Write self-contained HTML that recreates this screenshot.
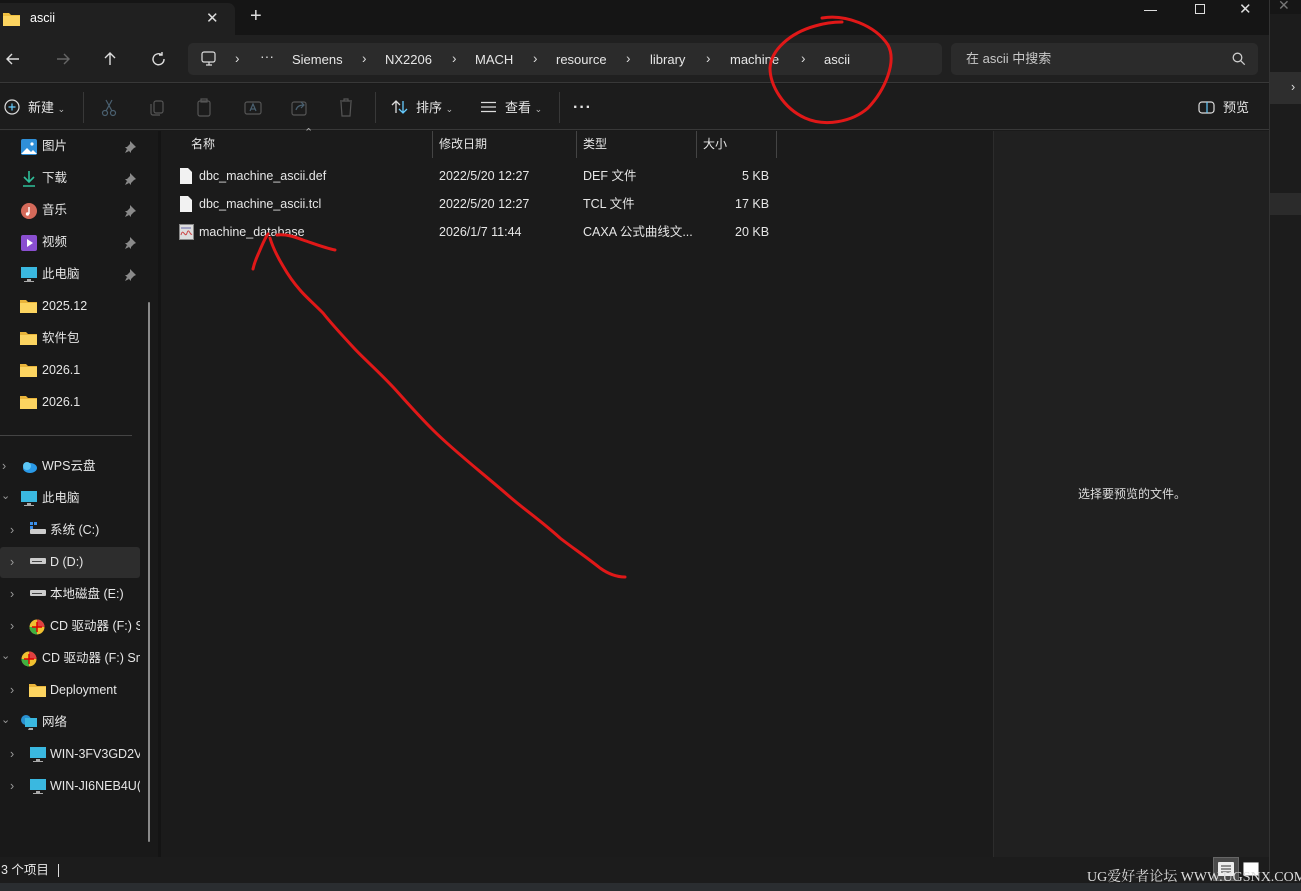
<!DOCTYPE html>
<html><head><meta charset="utf-8"><style>
*{margin:0;padding:0;box-sizing:border-box}
body{width:1301px;height:891px;overflow:hidden;background:#1a1a1a;font-family:"Liberation Sans","Noto Sans CJK SC",sans-serif;color:#e6e6e6;font-size:12.5px;position:relative}
.abs{position:absolute}
.t{position:absolute;white-space:nowrap;line-height:15px}
.dim{color:#9a9a9a}
</style></head><body>
<!-- right strip other window -->
<div class="abs" style="left:1269px;top:0;width:32px;height:891px;background:#1c1c1c"></div>
<div class="abs" style="left:1269px;top:0;width:32px;height:14px;background:#161616"></div>
<div class="t" style="left:1278px;top:-2px;color:#777;font-size:14px">✕</div>
<div class="abs" style="left:1269px;top:72px;width:32px;height:32px;background:#2e2e2e"></div>
<div class="t" style="left:1291px;top:80px;color:#ddd">›</div>
<div class="abs" style="left:1269px;top:193px;width:32px;height:22px;background:#2b2b2b"></div>
<div class="abs" style="left:1269px;top:0;width:1px;height:891px;background:#333"></div>
<!-- tab bar -->
<div class="abs" style="left:0;top:0;width:1269px;height:35px;background:#151515"></div>
<div class="abs" style="left:0;top:3px;width:235px;height:34px;background:#202020;border-radius:0 7px 0 0"></div>
<svg class="abs" style="left:3px;top:12px" width="18" height="14"><path d="M0 1h6l2 2h9v11H0z" fill="#f0c040"/><path d="M0 4h17v10H0z" fill="#fcd460"/></svg>
<div class="t" style="left:30px;top:11px;font-size:12.5px;color:#fff">ascii</div>
<div class="t" style="left:206px;top:11px;font-size:15px;color:#ddd">✕</div>
<div class="t" style="left:250px;top:9px;font-size:20px;color:#ddd;font-weight:300">+</div>
<div class="abs" style="left:1144px;top:10px;width:13px;height:1px;background:#ddd"></div>
<div class="abs" style="left:1195px;top:4px;width:10px;height:10px;border:1px solid #ddd"></div>
<div class="t" style="left:1239px;top:2px;font-size:15px;color:#ddd">✕</div>
<!-- address row -->
<div class="abs" style="left:0;top:35px;width:1269px;height:48px;background:#202020;border-bottom:1px solid #383838"></div>
<svg class="abs" style="left:0;top:45px" width="180" height="28" fill="none" stroke="#ddd" stroke-width="1.4">
<path d="M19 14H7M12 9l-5 5 5 5"/>
<path d="M57 14h12M64 9l5 5-5 5" stroke="#666"/>
<path d="M110 20V8M105 13l5-5 5 5"/>
<path d="M162 10a5.5 5.5 0 1 0 2 4M162 7v3h-3"/>
</svg>
<div class="abs" style="left:188px;top:43px;width:754px;height:32px;background:#2b2b2b;border-radius:5px"></div>
<svg class="abs" style="left:200px;top:50px" width="18" height="18" fill="none" stroke="#ddd" stroke-width="1.2"><rect x="2" y="2" width="13" height="10" rx="2"/><path d="M6 15h6M9 12v3"/></svg>
<div class="t" style="top:51px;left:235px;font-size:13.5px;color:#ddd">›</div>
<div class="t" style="top:49px;left:260px;font-size:14px;color:#ddd">···</div>
<div class="t" style="top:52px;left:292px;font-size:13px">Siemens</div>
<div class="t" style="top:51px;left:362px;font-size:13.5px;color:#ddd">›</div>
<div class="t" style="top:52px;left:385px;font-size:13px">NX2206</div>
<div class="t" style="top:51px;left:452px;font-size:13.5px;color:#ddd">›</div>
<div class="t" style="top:52px;left:475px;font-size:13px">MACH</div>
<div class="t" style="top:51px;left:533px;font-size:13.5px;color:#ddd">›</div>
<div class="t" style="top:52px;left:556px;font-size:13px">resource</div>
<div class="t" style="top:51px;left:626px;font-size:13.5px;color:#ddd">›</div>
<div class="t" style="top:52px;left:650px;font-size:13px">library</div>
<div class="t" style="top:51px;left:706px;font-size:13.5px;color:#ddd">›</div>
<div class="t" style="top:52px;left:730px;font-size:13px">machine</div>
<div class="t" style="top:51px;left:801px;font-size:13.5px;color:#ddd">›</div>
<div class="t" style="top:52px;left:824px;font-size:13px">ascii</div>
<div class="abs" style="left:951px;top:43px;width:307px;height:32px;background:#2b2b2b;border-radius:5px"></div>
<div class="t" style="top:51px;left:966px;font-size:13px;color:#c8c8c8">在 ascii 中搜索</div>
<svg class="abs" style="left:1232px;top:52px" width="14" height="14" fill="none" stroke="#ccc" stroke-width="1.3"><circle cx="5.5" cy="5.5" r="4.3"/><path d="M8.7 8.7l4 4"/></svg>
<!-- toolbar -->
<div class="abs" style="left:0;top:84px;width:1269px;height:46px;background:#1c1c1c;border-bottom:1px solid #383838"></div>
<svg class="abs" style="left:4px;top:99px" width="16" height="16" fill="none" stroke="#ddd" stroke-width="1.2"><circle cx="8" cy="8" r="7"/><path d="M8 4.5v7M4.5 8h7" stroke="#6cf"/></svg>
<div class="t" style="top:100px;left:28px;font-size:13px">新建 <span style="font-size:9px;color:#bbb">⌄</span></div>
<div class="abs" style="left:83px;top:92px;width:1px;height:31px;background:#383838"></div>
<svg class="abs" style="left:96px;top:96px" width="270" height="22" fill="none" stroke="#4a6070" stroke-width="1.2">
<circle cx="9" cy="17" r="2.5"/><circle cx="17" cy="17" r="2.5"/><path d="M10 15L16 4M16 15L10 4"/>
<rect x="58" y="5" width="9" height="12" rx="2" stroke="#555"/><path d="M55 8v9a2 2 0 0 0 2 2h7" stroke="#555"/>
<rect x="102" y="5" width="12" height="15" rx="2" stroke="#555"/><rect x="105" y="3" width="6" height="3" stroke="#555"/>
<rect x="149" y="6" width="16" height="12" rx="2" stroke="#555"/><path d="M154 15l3-7 3 7M155 13h4"/>
<rect x="196" y="6" width="14" height="13" rx="2" stroke="#555"/><path d="M200 14c1-4 4-5 8-5M205 6l3 3-3 3"/>
<path d="M244 5h12M248 5V3h4v2M245 6l1 14h8l1-14" stroke="#555"/>
</svg>
<div class="abs" style="left:375px;top:92px;width:1px;height:31px;background:#383838"></div>
<svg class="abs" style="left:391px;top:99px" width="18" height="16" fill="none" stroke-width="1.3"><path d="M5 14V2M1 6l4-4 4 4" stroke="#ddd"/><path d="M12 2v12M8 10l4 4 4-4" stroke="#6cf"/></svg>
<div class="t" style="top:100px;left:416px;font-size:13px">排序 <span style="font-size:9px;color:#bbb">⌄</span></div>
<svg class="abs" style="left:480px;top:101px" width="18" height="12" stroke="#ddd" stroke-width="1.2"><path d="M1 1.5h15M1 6h15M1 10.5h15"/></svg>
<div class="t" style="top:100px;left:505px;font-size:13px">查看 <span style="font-size:9px;color:#bbb">⌄</span></div>
<div class="abs" style="left:559px;top:92px;width:1px;height:31px;background:#383838"></div>
<div class="t" style="top:100px;left:573px;font-size:16px;font-weight:bold;letter-spacing:1px">···</div>
<svg class="abs" style="left:1198px;top:101px" width="18" height="14" fill="none" stroke-width="1.2"><rect x="1" y="1" width="15" height="11" rx="3" stroke="#ddd"/><path d="M9 1v11" stroke="#6cf"/></svg>
<div class="t" style="top:100px;left:1223px;font-size:13px">预览</div>
<!-- body -->
<div class="abs" style="left:0;top:131px;width:160px;height:726px;background:#191919"></div>
<div class="abs" style="left:158px;top:131px;width:3px;height:726px;background:#141414"></div>
<div class="abs" style="left:148px;top:302px;width:2px;height:540px;background:#8a8a8a;border-radius:1px"></div>
<div class="abs" style="left:0;top:435px;width:132px;height:1px;background:#444"></div>
<div class="abs" style="left:161px;top:131px;width:832px;height:726px;background:#1b1b1b"></div>
<div class="abs" style="left:993px;top:131px;width:276px;height:726px;background:#202020;border-left:1px solid #2c2c2c"></div>
<div class="t" style="left:1078px;top:487px;font-size:12px;color:#ddd">选择要预览的文件。</div>
<!-- sidebar quick access -->
<svg class="abs" style="left:21px;top:139px" width="16" height="16"><rect width="16" height="16" rx="2" fill="#2f8fd8"/><path d="M0 15l6-6 4 4 2-2 4 4z" fill="#fff"/><circle cx="11" cy="5" r="1.6" fill="#fff"/></svg>
<div class="t" style="left:42px;top:139px">图片</div>
<svg class="abs" style="left:21px;top:170px" width="16" height="18" fill="none" stroke="#2fbf9a" stroke-width="1.6"><path d="M8 1v11M3 7l5 5 5-5M2 16h12"/></svg>
<div class="t" style="left:42px;top:171px">下载</div>
<svg class="abs" style="left:21px;top:203px" width="16" height="16"><circle cx="8" cy="8" r="8" fill="#d56a5a"/><path d="M8 4v7" stroke="#fff" stroke-width="1.4"/><circle cx="6.5" cy="11" r="1.7" fill="#fff"/></svg>
<div class="t" style="left:42px;top:203px">音乐</div>
<svg class="abs" style="left:21px;top:235px" width="16" height="16"><rect width="16" height="16" rx="2" fill="#8a4fd0"/><path d="M6 4l6 4-6 4z" fill="#fff"/></svg>
<div class="t" style="left:42px;top:235px">视频</div>
<svg class="abs" style="left:20px;top:266px" width="18" height="18"><rect x="1" y="1" width="16" height="11" fill="#3ab8e0"/><path d="M7 13h4v2h3v1H4v-1h3z" fill="#aaa"/></svg>
<div class="t" style="left:42px;top:267px">此电脑</div>
<svg class="abs" style="left:124px;top:140px" width="14" height="146" fill="#8a8a8a"><g id="p"><path d="M6 1l6 6-2 1-3 3 0 2-6-6 2 0 3-3z"/><path d="M3 9l-2 4 4-2z"/></g><use href="#p" y="32"/><use href="#p" y="64"/><use href="#p" y="96"/><use href="#p" y="128"/></svg>
<svg class="abs" style="left:20px;top:299px" width="18" height="14"><path d="M0 1h6l2 2h9v11H0z" fill="#e9b43a"/><path d="M0 4h17v10H0z" fill="#fcd460"/></svg>
<div class="t" style="left:42px;top:299px">2025.12</div>
<svg class="abs" style="left:20px;top:331px" width="18" height="14"><path d="M0 1h6l2 2h9v11H0z" fill="#e9b43a"/><path d="M0 4h17v10H0z" fill="#fcd460"/></svg>
<div class="t" style="left:42px;top:331px">软件包</div>
<svg class="abs" style="left:20px;top:363px" width="18" height="14"><path d="M0 1h6l2 2h9v11H0z" fill="#e9b43a"/><path d="M0 4h17v10H0z" fill="#fcd460"/></svg>
<div class="t" style="left:42px;top:363px">2026.1</div>
<svg class="abs" style="left:20px;top:395px" width="18" height="14"><path d="M0 1h6l2 2h9v11H0z" fill="#e9b43a"/><path d="M0 4h17v10H0z" fill="#fcd460"/></svg>
<div class="t" style="left:42px;top:395px">2026.1</div>
<!-- tree -->
<div class="abs" style="left:0;top:547px;width:140px;height:31px;background:#2d2d2d;border-radius:3px"></div>
<div class="t dim" style="left:2px;top:459px">›</div>
<svg class="abs" style="left:20px;top:459px" width="18" height="14"><ellipse cx="10" cy="9" rx="7" ry="5" fill="#2a9ae8"/><circle cx="7" cy="7" r="4" fill="#5cc6f5"/></svg>
<div class="t" style="left:42px;top:459px">WPS云盘</div>
<div class="t dim" style="left:1px;top:489px;font-size:11px">⌄</div>
<svg class="abs" style="left:20px;top:490px" width="18" height="18"><rect x="1" y="1" width="16" height="11" fill="#3ab8e0"/><path d="M7 13h4v2h3v1H4v-1h3z" fill="#aaa"/></svg>
<div class="t" style="left:42px;top:491px">此电脑</div>
<div class="t dim" style="left:10px;top:523px">›</div>
<svg class="abs" style="left:29px;top:521px" width="18" height="14"><rect x="1" y="1" width="3" height="3" fill="#3a8ee8"/><rect x="5" y="1" width="3" height="3" fill="#3a8ee8"/><rect x="1" y="5" width="3" height="3" fill="#3a8ee8"/><rect x="1" y="8" width="16" height="5" rx="1" fill="#ccc"/></svg>
<div class="t" style="left:50px;top:523px">系统 (C:)</div>
<div class="t dim" style="left:10px;top:555px">›</div>
<svg class="abs" style="left:29px;top:557px" width="18" height="8"><rect x="1" y="1" width="16" height="6" rx="1" fill="#ccc"/><rect x="3" y="4" width="10" height="1" fill="#444"/></svg>
<div class="t" style="left:50px;top:555px">D (D:)</div>
<div class="t dim" style="left:10px;top:587px">›</div>
<svg class="abs" style="left:29px;top:589px" width="18" height="8"><rect x="1" y="1" width="16" height="6" rx="1" fill="#ccc"/><rect x="3" y="4" width="10" height="1" fill="#444"/></svg>
<div class="t" style="left:50px;top:587px">本地磁盘 (E:)</div>
<div class="t dim" style="left:10px;top:619px">›</div>
<svg class="abs" style="left:29px;top:619px" width="16" height="16"><circle cx="8" cy="8" r="7.5" fill="#f0c030"/><path d="M8 .5A7.5 7.5 0 0 1 15.5 8H8z" fill="#e04040"/><path d="M.5 8A7.5 7.5 0 0 0 8 15.5V8z" fill="#40b040"/><path d="M8 3v10M3 8h10" stroke="#d00" stroke-width="1.5"/></svg>
<div class="t" style="left:50px;top:619px;width:90px;overflow:hidden">CD 驱动器 (F:) S</div>
<div class="t dim" style="left:1px;top:649px;font-size:11px">⌄</div>
<svg class="abs" style="left:21px;top:651px" width="16" height="16"><circle cx="8" cy="8" r="7.5" fill="#f0c030"/><path d="M8 .5A7.5 7.5 0 0 1 15.5 8H8z" fill="#e04040"/><path d="M.5 8A7.5 7.5 0 0 0 8 15.5V8z" fill="#40b040"/><path d="M8 3v10M3 8h10" stroke="#d00" stroke-width="1.5"/></svg>
<div class="t" style="left:42px;top:651px;width:98px;overflow:hidden">CD 驱动器 (F:) Sm</div>
<div class="t dim" style="left:10px;top:683px">›</div>
<svg class="abs" style="left:29px;top:683px" width="18" height="14"><path d="M0 1h6l2 2h9v11H0z" fill="#e9b43a"/><path d="M0 4h17v10H0z" fill="#fcd460"/></svg>
<div class="t" style="left:50px;top:683px">Deployment</div>
<div class="t dim" style="left:1px;top:713px;font-size:11px">⌄</div>
<svg class="abs" style="left:20px;top:714px" width="18" height="18"><circle cx="6" cy="6" r="5" fill="#2a90d0"/><rect x="5" y="4" width="12" height="9" fill="#3ab8e0"/><path d="M9 14h4v2H8z" fill="#aaa"/></svg>
<div class="t" style="left:42px;top:715px">网络</div>
<div class="t dim" style="left:10px;top:747px">›</div>
<svg class="abs" style="left:29px;top:746px" width="18" height="18"><rect x="1" y="1" width="16" height="11" fill="#3ab8e0"/><path d="M7 13h4v2h3v1H4v-1h3z" fill="#aaa"/></svg>
<div class="t" style="left:50px;top:747px;width:90px;overflow:hidden">WIN-3FV3GD2V</div>
<div class="t dim" style="left:10px;top:779px">›</div>
<svg class="abs" style="left:29px;top:778px" width="18" height="18"><rect x="1" y="1" width="16" height="11" fill="#3ab8e0"/><path d="M7 13h4v2h3v1H4v-1h3z" fill="#aaa"/></svg>
<div class="t" style="left:50px;top:779px;width:90px;overflow:hidden">WIN-JI6NEB4U(</div>
<!-- headers -->
<div class="t" style="left:304px;top:126px;font-size:11px;color:#aaa">⌃</div>
<div class="t" style="left:191px;top:137px;font-size:12px">名称</div>
<div class="abs" style="left:432px;top:131px;width:1px;height:27px;background:#444"></div>
<div class="t" style="left:439px;top:137px;font-size:12px">修改日期</div>
<div class="abs" style="left:576px;top:131px;width:1px;height:27px;background:#444"></div>
<div class="t" style="left:583px;top:137px;font-size:12px">类型</div>
<div class="abs" style="left:696px;top:131px;width:1px;height:27px;background:#444"></div>
<div class="t" style="left:703px;top:137px;font-size:12px">大小</div>
<div class="abs" style="left:776px;top:131px;width:1px;height:27px;background:#444"></div>
<!-- files -->
<svg class="abs" style="left:180px;top:167px" width="12" height="17"><path d="M0 1h8l4 4v12H0z" fill="#f2f2f2"/></svg>
<div class="t" style="left:199px;top:169px;font-size:12.5px">dbc_machine_ascii.def</div>
<div class="t" style="left:439px;top:169px;font-size:12.5px">2022/5/20 12:27</div>
<div class="t" style="left:583px;top:169px;font-size:12.5px">DEF 文件</div>
<div class="t" style="left:742px;top:169px;font-size:12.5px">5 KB</div>
<svg class="abs" style="left:180px;top:195px" width="12" height="17"><path d="M0 1h8l4 4v12H0z" fill="#f2f2f2"/></svg>
<div class="t" style="left:199px;top:197px;font-size:12.5px">dbc_machine_ascii.tcl</div>
<div class="t" style="left:439px;top:197px;font-size:12.5px">2022/5/20 12:27</div>
<div class="t" style="left:583px;top:197px;font-size:12.5px">TCL 文件</div>
<div class="t" style="left:735px;top:197px;font-size:12.5px">17 KB</div>
<svg class="abs" style="left:179px;top:224px" width="15" height="16"><rect x=".5" y=".5" width="14" height="15" fill="#ddd" stroke="#888"/><path d="M2 11c2-8 4 4 6-2s3 3 5 1" stroke="#c44" fill="none"/><path d="M2 4h10" stroke="#66a"/></svg>
<div class="t" style="left:199px;top:225px;font-size:12.5px">machine_database</div>
<div class="t" style="left:439px;top:225px;font-size:12.5px">2026/1/7 11:44</div>
<div class="t" style="left:583px;top:225px;font-size:12.5px">CAXA 公式曲线文...</div>
<div class="t" style="left:735px;top:225px;font-size:12.5px">20 KB</div>
<!-- status bar -->
<div class="abs" style="left:0;top:857px;width:1269px;height:26px;background:#1c1c1c"></div>
<div class="t" style="left:1px;top:863px;font-size:12.5px">3 个项目</div>
<div class="abs" style="left:58px;top:864px;width:1px;height:13px;background:#ddd"></div>
<div class="abs" style="left:1213px;top:857px;width:26px;height:24px;background:#4a4a4a;border:1px solid #666"></div>
<svg class="abs" style="left:1218px;top:862px" width="16" height="14"><rect width="16" height="14" rx="1" fill="#eee"/><path d="M3 4h10M3 7h10M3 10h10" stroke="#333"/></svg>
<svg class="abs" style="left:1243px;top:862px" width="16" height="14"><rect x=".5" y=".5" width="15" height="13" rx="1" fill="#fff" stroke="#999"/></svg>
<div class="abs" style="left:0;top:883px;width:1301px;height:8px;background:#2a2d30"></div>
<div class="t" style="left:1087px;top:870px;font-family:'Liberation Serif','Noto Serif CJK SC',serif;font-size:14px;color:#ddd;line-height:16px">UG爱好者论坛 WWW.UGSNX.COM</div>
<!-- red annotations -->
<svg class="abs" style="left:0;top:0" width="1301" height="891" fill="none" stroke="#e01818" stroke-width="3" stroke-linecap="round" stroke-linejoin="round">
<path d="M625 577C615 577 607 573 600 568 585 556 570 546 560 538 540 520 525 510 510 497 485 475 455 452 433 430 415 412 405 400 393 387 375 368 362 357 353 347 340 333 330 322 323 313 312 302 305 296 300 290 292 281 287 273 283 266 277 256 273 248 270 238"/>
<path d="M253 269C255 260 258 255 260 250 263 243 265 238 268 234"/>
<path d="M277 235C287 234 295 237 303 240 315 244 325 248 335 250"/>
<path d="M822 18C845 14 875 25 888 45 897 62 885 90 868 108 852 122 825 127 805 118 783 108 770 85 770 68 771 50 790 33 815 26 825 23 835 22 842 22"/>
</svg>
</body></html>
